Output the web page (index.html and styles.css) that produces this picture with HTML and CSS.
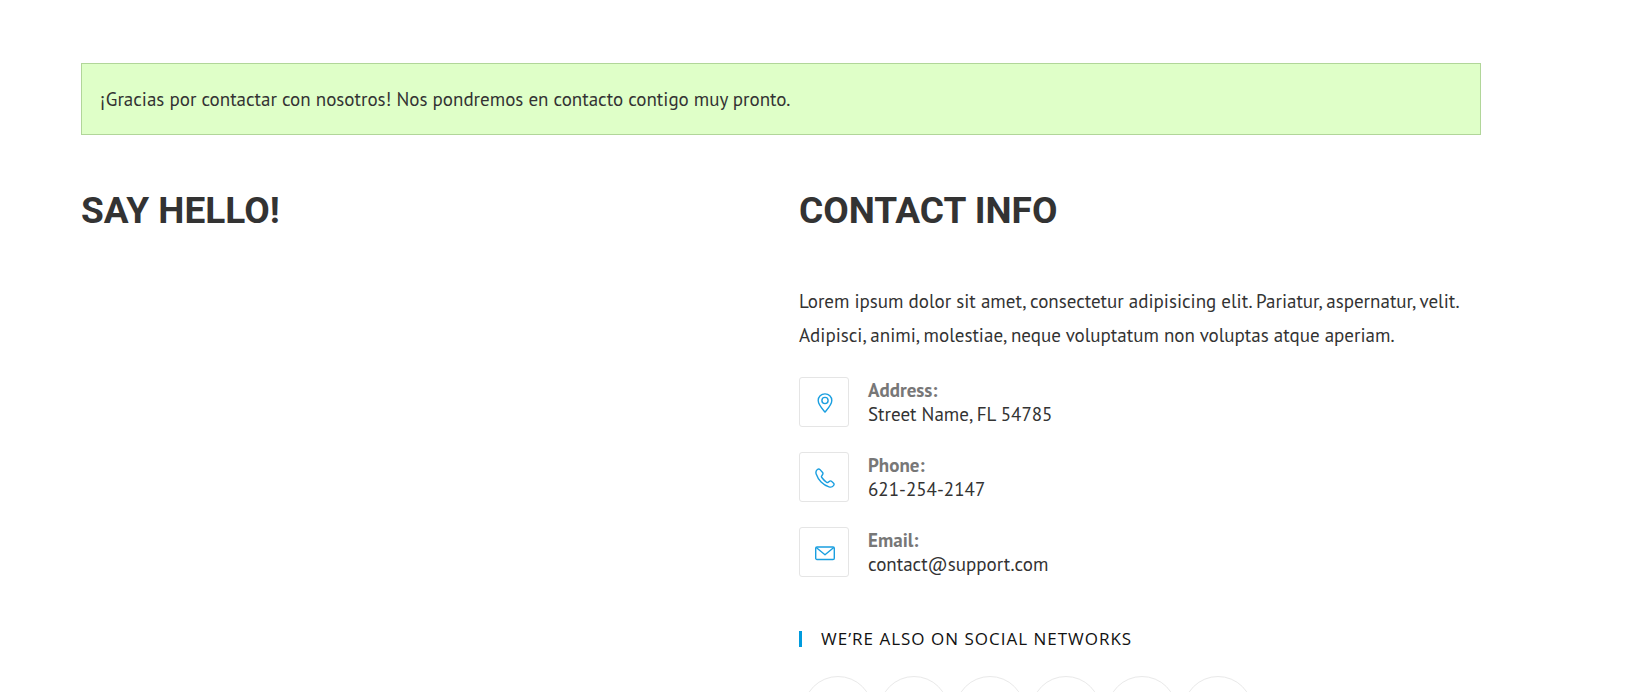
FILE: index.html
```html
<!DOCTYPE html>
<html lang="es">
<head>
<meta charset="utf-8">
<meta name="viewport" content="width=device-width, initial-scale=1">
<title>Contact</title>
<link rel="stylesheet" href="styles.css">
</head>
<body>
<main class="page">
  <div class="notice" role="status">¡Gracias por contactar con nosotros! Nos pondremos en contacto contigo muy pronto.</div>
  <div class="columns">
    <section class="column">
      <h2 class="heading">SAY HELLO!</h2>
    </section>
    <section class="column">
      <h2 class="heading">CONTACT INFO</h2>
      <p class="intro">Lorem ipsum dolor sit amet, consectetur adipisicing elit. Pariatur, aspernatur, velit. Adipisci, animi, molestiae, neque voluptatum non voluptas atque aperiam.</p>
      <ul class="contacts">
        <li class="contact">
          <span class="contact-icon">
            <svg viewBox="0 0 20 20" aria-hidden="true"><path d="M10 .9c-3.900 0-6.800 2.900-6.800 6.600 0 4.100 4.300 8.600 6.800 11.600 2.500-3 6.800-7.500 6.800-11.600C16.800 3.800 13.900.9 10 .9z"/><circle cx="10" cy="7.500" r="3.100"/></svg>
          </span>
          <div class="contact-text"><strong class="contact-label">Address:</strong><span>Street Name, FL 54785</span></div>
        </li>
        <li class="contact">
          <span class="contact-icon">
            <svg viewBox="0 0 20 20" aria-hidden="true"><path d="M2.400 1.500C1 2.600.6 4.200 1.200 6c1 3 2.700 5.700 4.900 7.900s4.900 3.900 7.900 4.900c1.800.6 3.400.2 4.500-1.200.8-1 .8-1.700.1-2.400l-1.800-1.700c-.8-.8-1.700-.8-2.500-.1l-1 .8c-.6.500-1.200.5-1.800 0-1.900-1.400-3.500-3-4.700-4.700-.5-.6-.5-1.200 0-1.800l.7-.9c.6-.8.6-1.700-.1-2.500L4.800 1.400c-.7-.7-1.500-.6-2.400.1z"/></svg>
          </span>
          <div class="contact-text"><strong class="contact-label">Phone:</strong><span>621-254-2147</span></div>
        </li>
        <li class="contact">
          <span class="contact-icon">
            <svg viewBox="0 0 20 20" aria-hidden="true"><rect x=".7" y="4" width="18.600" height="12.500" rx="1.300"/><path d="M1.200 4.500l8.800 7.300 8.800-7.300"/></svg>
          </span>
          <div class="contact-text"><strong class="contact-label">Email:</strong><span>contact@support.com</span></div>
        </li>
      </ul>
      <h3 class="social-title">WE’RE ALSO ON SOCIAL NETWORKS</h3>
      <nav class="social" aria-label="Social networks">
        <a class="social-link" href="#twitter" aria-label="Twitter"></a>
        <a class="social-link" href="#facebook" aria-label="Facebook"></a>
        <a class="social-link" href="#google" aria-label="Google"></a>
        <a class="social-link" href="#instagram" aria-label="Instagram"></a>
        <a class="social-link" href="#linkedin" aria-label="LinkedIn"></a>
        <a class="social-link" href="#youtube" aria-label="YouTube"></a>
      </nav>
    </section>
  </div>
</main>
</body>
</html>
```
FILE: styles.css
```css
* { box-sizing: border-box; }

body {
  margin: 0;
  background: #fff;
  color: #333;
  font-family: "PT Sans", "Noto Sans", sans-serif;
  font-size: 19px;
  line-height: 34px;
}

.page { padding: 63px 160px 0 81px; }

.notice {
  padding: 18px;
  border: 1px solid #b1d699;
  background: #dfffc8;
}

.columns {
  display: grid;
  grid-template-columns: 1fr 1fr;
  gap: 36px;
  margin-top: 52px;
}

.heading {
  margin: 0;
  font-family: Roboto, sans-serif;
  font-size: 37px;
  font-weight: 700;
  line-height: 48px;
}

.intro { margin: 49px 0 25px; }

.contacts {
  display: flex;
  flex-direction: column;
  gap: 25px;
  margin: 0;
  padding: 0;
  list-style: none;
}

.contact { display: flex; gap: 19px; }

.contact-icon {
  display: flex;
  align-items: center;
  justify-content: center;
  width: 50px;
  height: 50px;
  padding: 2px 0 0 2px;
  border: 1px solid #e5e5e5;
  border-radius: 3px;
}

.contact-icon svg {
  width: 20px;
  height: 20px;
  fill: none;
  stroke: #1a9fe0;
  stroke-width: 1.400;
  stroke-linejoin: round;
}

.contact-text {
  display: flex;
  flex-direction: column;
  padding-top: 1px;
  line-height: 24px;
}

.contact-label { color: #777; }

.social-title {
  margin: 54px 0 0;
  padding-left: 19px;
  border-left: 3px solid #009bdd;
  color: #111;
  font-family: "Open Sans", sans-serif;
  font-size: 17px;
  font-weight: 400;
  letter-spacing: 1px;
  line-height: 16px;
}

.social {
  display: flex;
  flex-wrap: wrap;
  gap: 6px;
  margin-top: 29px;
  padding-left: 4px;
}

.social-link {
  width: 70px;
  height: 70px;
  border: 1px solid #e9e9e9;
  border-radius: 50%;
}
```
